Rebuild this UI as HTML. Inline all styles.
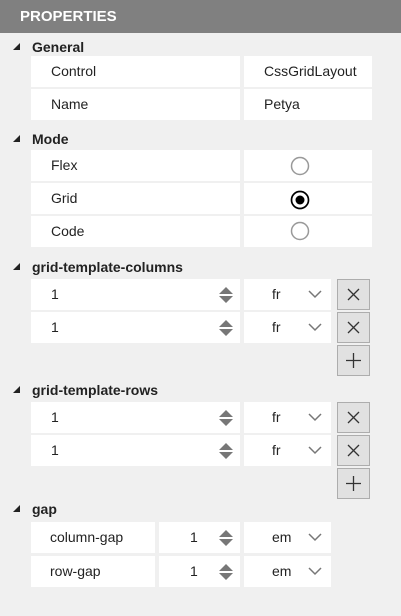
<!DOCTYPE html>
<html><head><style>
body{margin:0;width:401px;height:616px;background:#f0f0f0;font-family:"Liberation Sans",sans-serif;position:relative;overflow:hidden;font-size:14px;color:#222}
.hd{position:absolute;left:0;top:0;width:401px;height:33px;background:#808080;color:#fff;font-weight:bold;font-size:15px;line-height:33px;padding-left:20px;box-sizing:border-box}
.c{position:absolute;background:#fff;height:31px;line-height:31px;box-sizing:border-box}
.lb{position:absolute;left:32px;font-weight:bold;font-size:14px}
.tri{position:absolute;left:13px;width:0;height:0;border-left:7px solid transparent;border-bottom:7px solid #222}
.btn{position:absolute;left:337px;width:33px;height:31px;background:#e1e1e1;border:1px solid #adadad;box-sizing:border-box}
.sp{position:absolute;right:7px;top:8px;width:14px;height:16px}
.dd{position:absolute;right:9px;top:11px}
</style></head><body>
<div class="hd">PROPERTIES</div>

<div class="tri" style="top:43px"></div><div class="lb" style="top:39px">General</div>
<div class="c" style="left:31px;top:56px;width:209px;padding-left:20px">Control</div>
<div class="c" style="left:244px;top:56px;width:128px;padding-left:20px">CssGridLayout</div>
<div class="c" style="left:31px;top:89px;width:209px;padding-left:20px">Name</div>
<div class="c" style="left:244px;top:89px;width:128px;padding-left:20px">Petya</div>

<div class="tri" style="top:135px"></div><div class="lb" style="top:131px">Mode</div>
<div class="c" style="left:31px;top:150px;width:209px;padding-left:20px">Flex</div>
<div class="c" style="left:244px;top:150px;width:128px"><svg style="position:absolute;left:46px;top:6px" width="20" height="20"><circle cx="10" cy="10" r="8.5" fill="none" stroke="#999" stroke-width="1.5"/></svg></div>
<div class="c" style="left:31px;top:183px;width:209px;padding-left:20px">Grid</div>
<div class="c" style="left:244px;top:183px;width:128px"><svg style="position:absolute;left:46px;top:7px" width="20" height="20"><circle cx="10" cy="10" r="8.5" fill="none" stroke="#000" stroke-width="1.7"/><circle cx="10" cy="10" r="4.5" fill="#000"/></svg></div>
<div class="c" style="left:31px;top:216px;width:209px;padding-left:20px">Code</div>
<div class="c" style="left:244px;top:216px;width:128px"><svg style="position:absolute;left:46px;top:5px" width="20" height="20"><circle cx="10" cy="10" r="8.5" fill="none" stroke="#999" stroke-width="1.5"/></svg></div>

<div class="tri" style="top:263px"></div><div class="lb" style="top:259px">grid-template-columns</div>
<div class="c" style="left:31px;top:279px;width:209px;padding-left:20px">1<svg class="sp"><path d="M0 7L7 0L14 7Z M0 9L7 16L14 9Z" fill="#777"/></svg></div>
<div class="c" style="left:244px;top:279px;width:87px;padding-left:28px">fr<svg class="dd" width="14" height="9"><path d="M1 1L7 7L13 1" fill="none" stroke="#777" stroke-width="1.5"/></svg></div>
<div class="btn" style="top:279px"><svg width="31" height="29"><path d="M10 9L21 20M21 9L10 20" stroke="#333" stroke-width="1.3"/></svg></div>
<div class="c" style="left:31px;top:312px;width:209px;padding-left:20px">1<svg class="sp"><path d="M0 7L7 0L14 7Z M0 9L7 16L14 9Z" fill="#777"/></svg></div>
<div class="c" style="left:244px;top:312px;width:87px;padding-left:28px">fr<svg class="dd" width="14" height="9"><path d="M1 1L7 7L13 1" fill="none" stroke="#777" stroke-width="1.5"/></svg></div>
<div class="btn" style="top:312px"><svg width="31" height="29"><path d="M10 9L21 20M21 9L10 20" stroke="#333" stroke-width="1.3"/></svg></div>
<div class="btn" style="top:345px"><svg width="31" height="29"><path d="M15.5 7V22M8 14.5H23" stroke="#333" stroke-width="1.3"/></svg></div>

<div class="tri" style="top:386px"></div><div class="lb" style="top:382px">grid-template-rows</div>
<div class="c" style="left:31px;top:402px;width:209px;padding-left:20px">1<svg class="sp"><path d="M0 7L7 0L14 7Z M0 9L7 16L14 9Z" fill="#777"/></svg></div>
<div class="c" style="left:244px;top:402px;width:87px;padding-left:28px">fr<svg class="dd" width="14" height="9"><path d="M1 1L7 7L13 1" fill="none" stroke="#777" stroke-width="1.5"/></svg></div>
<div class="btn" style="top:402px"><svg width="31" height="29"><path d="M10 9L21 20M21 9L10 20" stroke="#333" stroke-width="1.3"/></svg></div>
<div class="c" style="left:31px;top:435px;width:209px;padding-left:20px">1<svg class="sp"><path d="M0 7L7 0L14 7Z M0 9L7 16L14 9Z" fill="#777"/></svg></div>
<div class="c" style="left:244px;top:435px;width:87px;padding-left:28px">fr<svg class="dd" width="14" height="9"><path d="M1 1L7 7L13 1" fill="none" stroke="#777" stroke-width="1.5"/></svg></div>
<div class="btn" style="top:435px"><svg width="31" height="29"><path d="M10 9L21 20M21 9L10 20" stroke="#333" stroke-width="1.3"/></svg></div>
<div class="btn" style="top:468px"><svg width="31" height="29"><path d="M15.5 7V22M8 14.5H23" stroke="#333" stroke-width="1.3"/></svg></div>

<div class="tri" style="top:505px"></div><div class="lb" style="top:501px">gap</div>
<div class="c" style="left:31px;top:522px;width:124px;padding-left:19px">column-gap</div>
<div class="c" style="left:159px;top:522px;width:81px;padding-left:31px">1<svg class="sp"><path d="M0 7L7 0L14 7Z M0 9L7 16L14 9Z" fill="#777"/></svg></div>
<div class="c" style="left:244px;top:522px;width:87px;padding-left:28px">em<svg class="dd" width="14" height="9"><path d="M1 1L7 7L13 1" fill="none" stroke="#777" stroke-width="1.5"/></svg></div>
<div class="c" style="left:31px;top:556px;width:124px;padding-left:19px">row-gap</div>
<div class="c" style="left:159px;top:556px;width:81px;padding-left:31px">1<svg class="sp"><path d="M0 7L7 0L14 7Z M0 9L7 16L14 9Z" fill="#777"/></svg></div>
<div class="c" style="left:244px;top:556px;width:87px;padding-left:28px">em<svg class="dd" width="14" height="9"><path d="M1 1L7 7L13 1" fill="none" stroke="#777" stroke-width="1.5"/></svg></div>
</body></html>
